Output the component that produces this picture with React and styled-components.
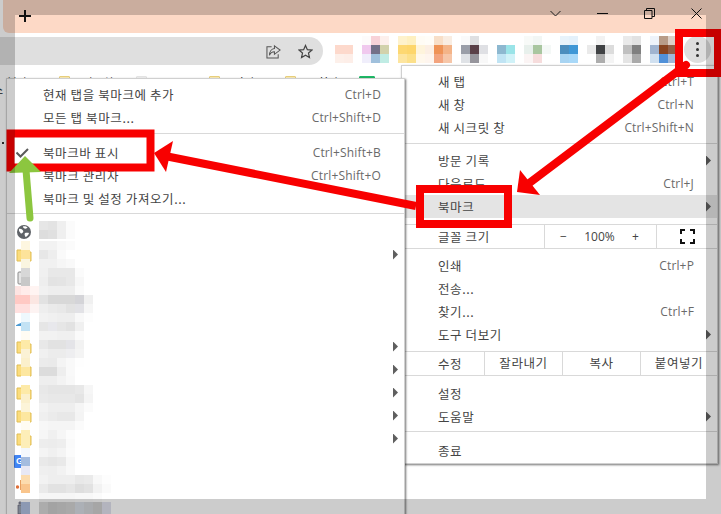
import React from 'react';
import styled, { createGlobalStyle } from 'styled-components';

const GlobalStyle = createGlobalStyle`
  html, body {
    margin: 0;
    padding: 0;
    background: #fff;
  }
`;

const KR = `"Noto Sans CJK KR", "Liberation Sans", sans-serif`;
const LATIN = `"Open Sans", "Noto Sans CJK KR", sans-serif`;

const Screen = styled.div`
  position: relative;
  width: 721px;
  height: 514px;
  overflow: hidden;
  background: #fff;
  font-family: ${KR};
`;

const TabStrip = styled.div`
  display: flex;
  height: 33px;
  background: #fff;
`;

const TabFill = styled.div`
  flex: 1;
  margin-left: 3px;
  padding: 0 19px 0 16px;
  display: flex;
  align-items: flex-start;
  background: #fdd9c6;
  border-bottom-left-radius: 6px;
`;

const PlusButton = styled.svg`
  width: 12px;
  height: 12px;
  margin-top: 10px;
`;

const WindowControls = styled.div`
  margin-left: auto;
  display: flex;
  gap: 36px;
  padding-top: 8px;
`;

const WindowIcon = styled.svg`
  width: 11px;
  height: 11px;
`;

const Toolbar = styled.div`
  display: flex;
  align-items: flex-start;
  height: 36px;
`;

const Omnibox = styled.div`
  width: 323px;
  height: 28px;
  margin-top: 4px;
  padding-right: 10px;
  box-sizing: border-box;
  display: flex;
  align-items: center;
  justify-content: flex-end;
  gap: 17px;
  background: #dfdfdf;
  border-radius: 0 14px 14px 0;
`;

const ToolIcon = styled.svg`
  width: 15px;
  height: 15px;
`;

const Extensions = styled.div`
  display: flex;
  gap: 9px;
  margin: 3px 0 0 12px;
`;

const Mosaic = styled.div`
  display: grid;
  grid-template-columns: repeat(${p => p.$cols}, 9px);
  grid-auto-rows: 9px;
`;

const Cell = styled.span`
  background: ${p => p.$color};
`;

const KebabButton = styled.div`
  width: 27px;
  height: 27px;
  margin: 3px 0 0 7px;
  border-radius: 50%;
  background: #dedede;
  display: flex;
  flex-direction: column;
  align-items: center;
  justify-content: center;
  gap: 3px;
`;

const KebabDot = styled.span`
  width: 3px;
  height: 3px;
  border-radius: 50%;
  background: #333;
`;

const BookmarkBar = styled.div`
  display: flex;
  align-items: flex-start;
  height: 9px;
  padding: 6px 0 0 7px;
  overflow: hidden;
  font-size: 11px;
  line-height: 14px;
  color: #222;
`;

const BarLabel = styled.span`
  width: ${p => p.$w}px;
  margin-left: ${p => p.$gap || 0}px;
  white-space: nowrap;
  flex-shrink: 0;
`;

const BarIcon = styled.span`
  width: ${p => p.$w}px;
  height: 8px;
  margin: 1px 0 0 ${p => p.$gap}px;
  flex-shrink: 0;
  box-sizing: border-box;
  background: ${p => p.$bg};
  border: 1px solid ${p => p.$line};
  border-radius: 1px 1px 0 0;
`;

const PageEdge = styled.div`
  margin-left: -7px;
  font-size: 11px;
  line-height: 10px;
  color: #222;
`;

const PageDot = styled.div`
  width: 2px;
  height: 2px;
  margin: 48px 0 0 2px;
  background: #333;
`;

const Menu = styled.div`
  position: absolute;
  box-sizing: border-box;
  background: #fff;
  border: 1px solid #d0d0d0;
  box-shadow: 1px 1px 2px rgba(0, 0, 0, 0.55);
  color: #444;
  font-size: 12.5px;
  letter-spacing: 0.6px;
`;

const BookmarkMenu = styled(Menu)`
  left: 6px;
  top: 78px;
  width: 399px;
  height: 460px;
  padding-top: 4px;
  z-index: 2;
`;

const ChromeMenu = styled(Menu)`
  left: 401px;
  top: 65px;
  width: 317px;
  height: 399px;
  padding-top: 4px;
  z-index: 1;
`;

const Row = styled.div`
  display: flex;
  align-items: center;
  height: 23px;
  padding: 0 6px 0 ${p => p.$indent}px;
  background: ${p => (p.$active ? '#e4e4e4' : 'transparent')};
`;

const Lead = styled.span`
  width: 27px;
  flex-shrink: 0;
  display: flex;
  align-items: center;
`;

const Label = styled.span`
  flex: 1;
  white-space: nowrap;
`;

const Shortcut = styled.span`
  font-family: ${LATIN};
  font-size: 12px;
  letter-spacing: 0.15px;
  color: #6a6a6a;
`;

const Caret = styled.span`
  width: 5px;
  height: 10px;
  margin-left: 12px;
  flex-shrink: 0;
  ${p => p.$on && `
    background: #5f5f5f;
    clip-path: polygon(0 0, 100% 50%, 0 100%);
  `}
`;

const Separator = styled.div`
  height: 1px;
  margin: ${p => p.$top}px 0 ${p => p.$bottom}px;
  background: #d9d9d9;
`;

const GridRow = styled.div`
  display: grid;
  box-sizing: border-box;
  grid-template-columns: ${p => p.$cols};
  height: 25px;
  margin: ${p => p.$top}px 0 ${p => p.$bottom}px;
  border-top: 1px solid #d9d9d9;
  border-bottom: 1px solid #d9d9d9;
`;

const GridCell = styled.div`
  display: flex;
  align-items: center;
  justify-content: ${p => p.$align || 'center'};
  padding: ${p => p.$pad || '0'};
  border-left: ${p => (p.$first ? 'none' : '1px solid #d9d9d9')};
  padding-bottom: ${p => (p.$raised ? '3px' : '0')};
`;

const ZoomValue = styled.span`
  font-family: ${LATIN};
  font-size: 12px;
  letter-spacing: 0;
  color: #444;
`;

const BlurBlock = styled.div`
  position: absolute;
  left: 8px;
  top: ${p => p.$top}px;
  display: grid;
  grid-template-columns: 6px 9px 9px repeat(8, 9px);
  grid-auto-rows: 9px;
`;

const FaviconSvg = styled.svg`
  width: 16px;
  height: 16px;
`;

const GoogleBadge = styled.span`
  width: 13px;
  height: 13px;
  margin-left: -2px;
  background: #4285f4;
  border-radius: 1px;
  color: #fff;
  font: bold 9px/13px "Liberation Sans", sans-serif;
  letter-spacing: 0;
  text-indent: 2px;
`;

const Annotations = styled.svg`
  position: absolute;
  left: 0;
  top: 0;
  z-index: 3;
`;

const DimFrame = styled.div`
  position: absolute;
  inset: 0;
  z-index: 4;
  box-sizing: border-box;
  border: 15px solid rgba(0, 0, 0, 0.2);
  pointer-events: none;
`;

const extensions = [
  { cols: 2, cells: ['#fff', '#fff', '#fdd9cc', '#fdd9cc', '#fdf0ea', '#fdeee8'] },
  { cols: 3, cells: ['#fdfbfb', '#f8d2d8', '#fdf0ec', '#f0c9ee', '#747088', '#d2d2ac', '#f0eefb', '#a0c0dc', '#c0ece4'] },
  { cols: 6, cells: ['#fef2cc', '#fef0c0', '#fffcf5', '#fffdf8', '#f8dfc8', '#f9ede2', '#fdd872', '#fdd66c', '#fef4dc', '#fcefe4', '#ef9356', '#f4b488', '#fde59f', '#fce08a', '#fff8ec', '#fef5ee', '#f3a47e', '#f6c6a8'] },
  { cols: 3, cells: ['#fafafa', '#dfe0e2', '#fff', '#9a9ea8', '#5a4048', '#dfe0e4', '#dfe2e6', '#96959c', '#f8f8f8'] },
  { cols: 2, cells: ['#fff', '#fff', '#8db8d0', '#9ae4e8', '#c0e4f4', '#d0f2f8'] },
  { cols: 3, cells: ['#f8faf8', '#f2f6f4', '#fff', '#e8f0ec', '#a9c6a0', '#f4f8f6', '#fbf4f4', '#f6dcdc', '#fff'] },
  { cols: 2, cells: ['#e8f3fb', '#e4f1fb', '#4b8dbd', '#3f97d6', '#a8d4f2', '#a8d8f8'] },
  { cols: 3, cells: ['#fff', '#f2f2f2', '#fff', '#eaeaea', '#404244', '#dcdcdc', '#fff', '#adadad', '#f4f4f4'] },
  { cols: 2, cells: ['#eaeaea', '#e2e2e2', '#c0c0c0', '#808080', '#e4e4e4', '#aaaaaa'] },
  { cols: 3, cells: ['#eef3fa', '#b89c88', '#dcd0c8', '#a0b4d0', '#884420', '#906048', '#d0e0f0', '#5090d8', '#a0b8d8'] },
];

// blurred bookmark names: [x15, x21, x30, then 9px columns from x39]
const blurTop = [
  ['', '', '', 'e6e6e6', 'e3e3e3', 'efefef', 'fbfbfb'],
  ['', '', '', 'dddddd', 'e0e0e0', 'efefef', 'fbfbfb'],
];

const blurRows = [
  ['', 'fdf6e0', '', 'f2f2f2', 'f2f2f2', 'f8f8f8', 'fbfbfb'],
  ['', 'fde39a', '', 'e7e7e7', 'eeeeee', 'fafafa', 'ffffff'],
  ['', 'faf5e0', '', 'f1f1f1', 'f1f1f1', 'f6f6f6', 'f9f9f9'],
  ['', 'd7d7d7', '', 'f0f0f0', 'e8e8e8', 'e8e8e8', 'e8e8e8', 'fbfbfb'],
  ['', 'c8c8c8', '', 'eeeeee', 'e3e3e3', 'e4e4e4', 'e8e8e8', 'f7f7f7'],
  ['fde4e2', 'ffecea', 'fff4f2', 'f1f1f1', 'eeeeee', 'eeeeee', 'eeeeee', 'fafafa'],
  ['ffc9c4', 'ffc9c4', 'fbe6e2', 'e2e2e2', 'd8d8d8', 'd8d8d8', 'd8d8d8', 'd4d4d8', 'f0f0f0'],
  ['ffe0df', 'ffe0df', 'fdf3f2', 'eeeeee', 'eaeaea', 'e8e8e8', 'e2e2e2', 'e2e2e6', 'f6f6f6'],
  ['', 'eef8fd', '', 'f2f2f2', 'f0f0f0', 'eeeeee', 'eeeeee', 'f8f8f8', 'fdfdfd'],
  ['', 'c2e2f4', '', 'e6e6e6', 'e8e8ec', 'e6e6e6', 'e2e2e2', 'f0f0f0'],
  ['', 'fffcf3', '', 'f2f2f2', 'f2f2f2', 'f0f0f0', 'f0f0f0', 'fafafa'],
  ['', 'fdeaa8', '', 'e8e8e8', 'e2e2e2', 'e2e2e2', 'e4e4e8', 'f2f2f2'],
  ['', 'fbf2d5', '', 'f0f0f0', 'ececec', 'ececec', 'eeeef0', 'f4f4f4'],
  ['', 'fbf0cc', '', 'ebebeb', 'eaeaea', 'f4f4f4', 'f9f9f9', 'fefefe'],
  ['', 'fde7a0', '', 'dcdcdc', 'dcdcdc', 'eeeeee', 'f9f9f9'],
  ['', 'ffffff', '', 'eeeeee', 'eeeeee', 'f3f3f3', 'f8f8f8'],
  ['', 'fdeaa8', '', 'e8e8e8', 'e5e5e5', 'e5e5e5', 'e5e5e5', 'e8e8e8', 'f6f6f6'],
  ['', 'fbf0cc', '', 'eaeaea', 'e8e8e8', 'e8e8e8', 'e8e8e8', 'e4e4e4', 'f4f4f4'],
  ['', 'fcf4d8', '', 'f2f2f2', 'eeeeee', 'eeeeee', 'eeeeee', 'f5f5f5', 'fbfbfb'],
  ['', 'fde7a0', '', 'efefef', 'ebebeb', 'e8e8e8', 'e8e8e8', 'f4f4f4'],
  ['', 'fffcf3', '', 'f7f7f7', 'f5f5f5', 'f5f5f5', 'f5f5f5', 'fbfbfb'],
  ['', 'fdeeb8', '', 'f6f6f6', 'f0f0f0', 'f6f6f6', 'fcfcfc'],
  ['', 'fdeeb8', '', 'ededed', 'ececec', 'eeeeee', 'fafafa'],
  ['', 'f4f8fd', '', 'f4f4f4', 'f0f0f0', 'f4f4f4', 'fbfbfb'],
  ['', 'a4bcdf', '', 'e9e9e9', 'e6e6e6', 'e9e9e9', 'f7f7f7'],
  ['', 'e8e8f4', '', 'efefef', 'eeeeee', 'f2f2f2', 'f8f8f8'],
  ['', 'fcdcae', '', 'f2f2f2', 'eeeeee', 'eeeeee', 'eeeeee', 'e8e8e8', 'eaeaea', 'f8f8f8', 'fdfdfd'],
  ['', 'f9c58c', '', 'eaeaea', 'e2e2e2', 'e2e2e2', 'e6e6e6', 'dedede', 'e2e2e2', 'f2f2f2', 'fafafa'],
  ['', 'ffffff', '', 'f6f6f6', 'f6f6f6', 'f6f6f6', 'f6f6f6', 'f8f8f8', 'f8f8f8', 'fbfbfb'],
  ['', 'b0c0e0', '', 'd8d8d8', 'cccccc', 'd0d0d0', 'd4d4d4', 'd8dde4', 'd4d6da', 'd0d0d0', 'e0e2ee'],
  ['', 'b0c0e0', '', 'd8d8d8', 'cccccc', 'd0d0d0', 'd4d4d4', 'd8dde4', 'd4d6da', 'd0d0d0', 'e0e2ee'],
];

const BlurCells = ({ rows }) =>
  rows.flatMap((row, r) =>
    Array.from({ length: 11 }, (_, c) => (
      <Cell key={`${r}-${c}`} $color={row[c] ? `#${row[c]}` : 'transparent'} />
    ))
  );

const Folder = () => (
  <FaviconSvg viewBox="0 0 16 16">
    <path d="M1 3h5l1.500 2H15v9H1z" fill="#fbdc7c" stroke="#e0bd55" />
  </FaviconSvg>
);

const Globe = () => (
  <FaviconSvg viewBox="0 0 16 16">
    <circle cx="8" cy="8" r="7" fill="#5f6368" />
    <path d="M3 5c2-.5 3 .5 4 1.500S6.500 9 5.500 9.500 4 8 3 7zM9 9c1.500-.5 3-.5 4 0-.5 2-2 3.500-3.500 4C9 12 8 10 9 9zM7 2.500c1.500-.5 3.500 0 4.500 1-.5 1-2 1.500-3 1S7 3.500 7 2.500z" fill="#fff" />
  </FaviconSvg>
);

const Doc = () => (
  <FaviconSvg viewBox="0 0 16 16">
    <rect x="2" y="2" width="11" height="12" rx="1" fill="#e4e4e4" stroke="#8a8a8a" />
  </FaviconSvg>
);

const Swoosh = () => (
  <FaviconSvg viewBox="0 0 16 16">
    <path d="M-2 10c2-.5 4-2 7-3v3z" fill="#4a9ad4" />
  </FaviconSvg>
);

const OrangeDot = () => (
  <FaviconSvg viewBox="0 0 16 16">
    <circle cx="1.500" cy="10" r="1.700" fill="#e0703a" />
    <rect x="4" y="3" width="4" height="10" fill="#e8a060" />
  </FaviconSvg>
);

const Trash = () => (
  <FaviconSvg viewBox="0 0 16 16">
    <path d="M2 5h5v9H2zM3 2h3v2H3z" fill="#9aa4b4" stroke="#667" strokeWidth=".7" />
  </FaviconSvg>
);

const bookmarkRows = [
  { icon: <Globe /> },
  { icon: <Folder />, sub: true },
  { icon: <Doc /> },
  { icon: null },
  { icon: <Swoosh /> },
  { icon: <Folder />, sub: true },
  { icon: <Folder />, sub: true },
  { icon: <Folder />, sub: true },
  { icon: <Folder />, sub: true },
  { icon: <Folder />, sub: true },
  { icon: <GoogleBadge>G</GoogleBadge> },
  { icon: <OrangeDot /> },
  { icon: <Trash /> },
];

const MenuRow = ({ indent, lead, label, shortcut, sub, active }) => (
  <Row $indent={indent} $active={active}>
    {lead !== undefined && <Lead>{lead}</Lead>}
    <Label>{label}</Label>
    {shortcut && <Shortcut>{shortcut}</Shortcut>}
    <Caret $on={sub} />
  </Row>
);

const App = () => (
  <Screen>
    <GlobalStyle />

    <TabStrip>
      <TabFill>
        <PlusButton viewBox="0 0 12 12">
          <path d="M6 0v12M0 6h12" stroke="#111" strokeWidth="2" />
        </PlusButton>
        <WindowControls>
          <WindowIcon viewBox="0 0 11 11">
            <path d="M.5 3l5 5 5-5" fill="none" stroke="#222" />
          </WindowIcon>
          <WindowIcon viewBox="0 0 11 11">
            <path d="M0 5.500h11" stroke="#111" />
          </WindowIcon>
          <WindowIcon viewBox="0 0 11 11">
            <path d="M.5 2.500h7.500v8H.5zM2.500 2.500V.5h8v8H8" fill="none" stroke="#111" />
          </WindowIcon>
          <WindowIcon viewBox="0 0 11 11">
            <path d="M.5.500l10 10M10.500.500l-10 10" stroke="#111" />
          </WindowIcon>
        </WindowControls>
      </TabFill>
    </TabStrip>

    <Toolbar>
      <Omnibox>
        <ToolIcon viewBox="0 0 16 16">
          <path d="M6 3H1v12h12v-4" fill="none" stroke="#555" strokeWidth="1.100" />
          <path d="M9 2l6 4.500L9 11V8.300C6.500 8.300 4.700 9.500 3.700 12 3.800 8 6 5 9 4.800z" fill="none" stroke="#555" strokeWidth="1.100" />
        </ToolIcon>
        <ToolIcon viewBox="0 0 16 16">
          <path d="M8 1.500l2 4.500 4.800.5-3.600 3.200 1 4.800L8 12l-4.200 2.500 1-4.800L1.200 6.500 6 6z" fill="none" stroke="#444" strokeWidth="1.300" />
        </ToolIcon>
      </Omnibox>
      <Extensions>
        {extensions.map((ext, i) => (
          <Mosaic key={i} $cols={ext.cols}>
            {ext.cells.map((color, j) => (
              <Cell key={j} $color={color} />
            ))}
          </Mosaic>
        ))}
      </Extensions>
      <KebabButton>
        <KebabDot />
        <KebabDot />
        <KebabDot />
      </KebabButton>
    </Toolbar>

    <BookmarkBar>
      <BarLabel $w={31}>북마크</BarLabel>
      <BarIcon $w={11} $gap={21} $bg="#fdeeb8" $line="#e8cf7c" />
      <BarLabel $w={32} $gap={13}>자료실</BarLabel>
      <BarIcon $w={11} $gap={21} $bg="#f2f2f2" $line="#e4e4e4" />
      <BarIcon $w={11} $gap={62} $bg="#fdeeb8" $line="#e8cf7c" />
      <BarLabel $w={32} $gap={14}>사이트</BarLabel>
      <BarIcon $w={11} $gap={19} $bg="#fdeeb8" $line="#e8cf7c" />
      <BarLabel $w={34} $gap={12}>시청각</BarLabel>
      <BarIcon $w={16} $gap={17} $bg="#1fb866" $line="#1fb866" />
    </BookmarkBar>
    <PageEdge>스</PageEdge>
    <PageDot />

    <BookmarkMenu>
      <MenuRow indent={36} label="현재 탭을 북마크에 추가" shortcut="Ctrl+D" />
      <MenuRow indent={36} label="모든 탭 북마크..." shortcut="Ctrl+Shift+D" />
      <Separator $top={4} $bottom={7} />
      <MenuRow
        indent={9}
        lead={
          <FaviconSvg viewBox="0 0 16 16">
            <path d="M.5 7.500l4 4L12 4" fill="none" stroke="#5a5a5a" strokeWidth="2" />
          </FaviconSvg>
        }
        label="북마크바 표시"
        shortcut="Ctrl+Shift+B"
      />
      <MenuRow indent={36} label="북마크 관리자" shortcut="Ctrl+Shift+O" />
      <MenuRow indent={36} label="북마크 및 설정 가져오기..." />
      <Separator $top={3} $bottom={6} />
      {bookmarkRows.map((row, i) => (
        <MenuRow key={i} indent={9} lead={row.icon} label="" sub={row.sub} />
      ))}
      <BlurBlock $top={142}>
        <BlurCells rows={blurTop} />
      </BlurBlock>
      <BlurBlock $top={162}>
        <BlurCells rows={blurRows} />
      </BlurBlock>
    </BookmarkMenu>

    <ChromeMenu>
      <MenuRow indent={36} label="새 탭" shortcut="Ctrl+T" />
      <MenuRow indent={36} label="새 창" shortcut="Ctrl+N" />
      <MenuRow indent={36} label="새 시크릿 창" shortcut="Ctrl+Shift+N" />
      <Separator $top={4} $bottom={5} />
      <MenuRow indent={36} label="방문 기록" sub />
      <MenuRow indent={36} label="다운로드" shortcut="Ctrl+J" />
      <MenuRow indent={36} label="북마크" sub active />
      <GridRow $cols="142px 112px 1fr" $top={6} $bottom={5}>
        <GridCell $first $align="flex-start" $pad="0 0 0 36px">글꼴 크기</GridCell>
        <GridCell $align="space-between" $pad="0 17px 0 15px">
          <ZoomValue>−</ZoomValue>
          <ZoomValue>100%</ZoomValue>
          <ZoomValue>+</ZoomValue>
        </GridCell>
        <GridCell>
          <ToolIcon viewBox="0 0 15 15">
            <path d="M1 5V1h4M10 1h4v4M14 10v4h-4M5 14H1v-4" fill="none" stroke="#111" strokeWidth="2" />
          </ToolIcon>
        </GridCell>
      </GridRow>
      <MenuRow indent={36} label="인쇄" shortcut="Ctrl+P" />
      <MenuRow indent={36} label="전송..." />
      <MenuRow indent={36} label="찾기..." shortcut="Ctrl+F" />
      <MenuRow indent={36} label="도구 더보기" sub />
      <GridRow $cols="82px 78px 78px 1fr" $top={5} $bottom={6}>
        <GridCell $first $align="flex-start" $pad="0 0 0 36px">수정</GridCell>
        <GridCell $raised>잘라내기</GridCell>
        <GridCell $raised>복사</GridCell>
        <GridCell $raised>붙여넣기</GridCell>
      </GridRow>
      <MenuRow indent={36} label="설정" />
      <MenuRow indent={36} label="도움말" sub />
      <Separator $top={3} $bottom={7} />
      <MenuRow indent={36} label="종료" />
    </ChromeMenu>

    <Annotations width="721" height="514" viewBox="0 0 721 514">
      <g fill="none" stroke="#f80000" strokeWidth="8">
        <rect x="679" y="33" width="39" height="40" />
        <rect x="10.500" y="133.500" width="140" height="34" />
        <rect x="420" y="189" width="88" height="35" />
      </g>
      <path d="M686 65L528 184" stroke="#f80000" strokeWidth="8" strokeLinecap="round" />
      <polygon points="517,192 520,170 540,195" fill="#f80000" />
      <path d="M416 206L165 156" stroke="#f80000" strokeWidth="8" />
      <polygon points="154,153 173,141 166,172" fill="#f80000" />
      <path d="M30 218L26 170" stroke="#8cc63f" strokeWidth="7" strokeLinecap="round" />
      <polygon points="25,156 9,173 41,172" fill="#8cc63f" />
    </Annotations>

    <DimFrame />
  </Screen>
);

export default App;
